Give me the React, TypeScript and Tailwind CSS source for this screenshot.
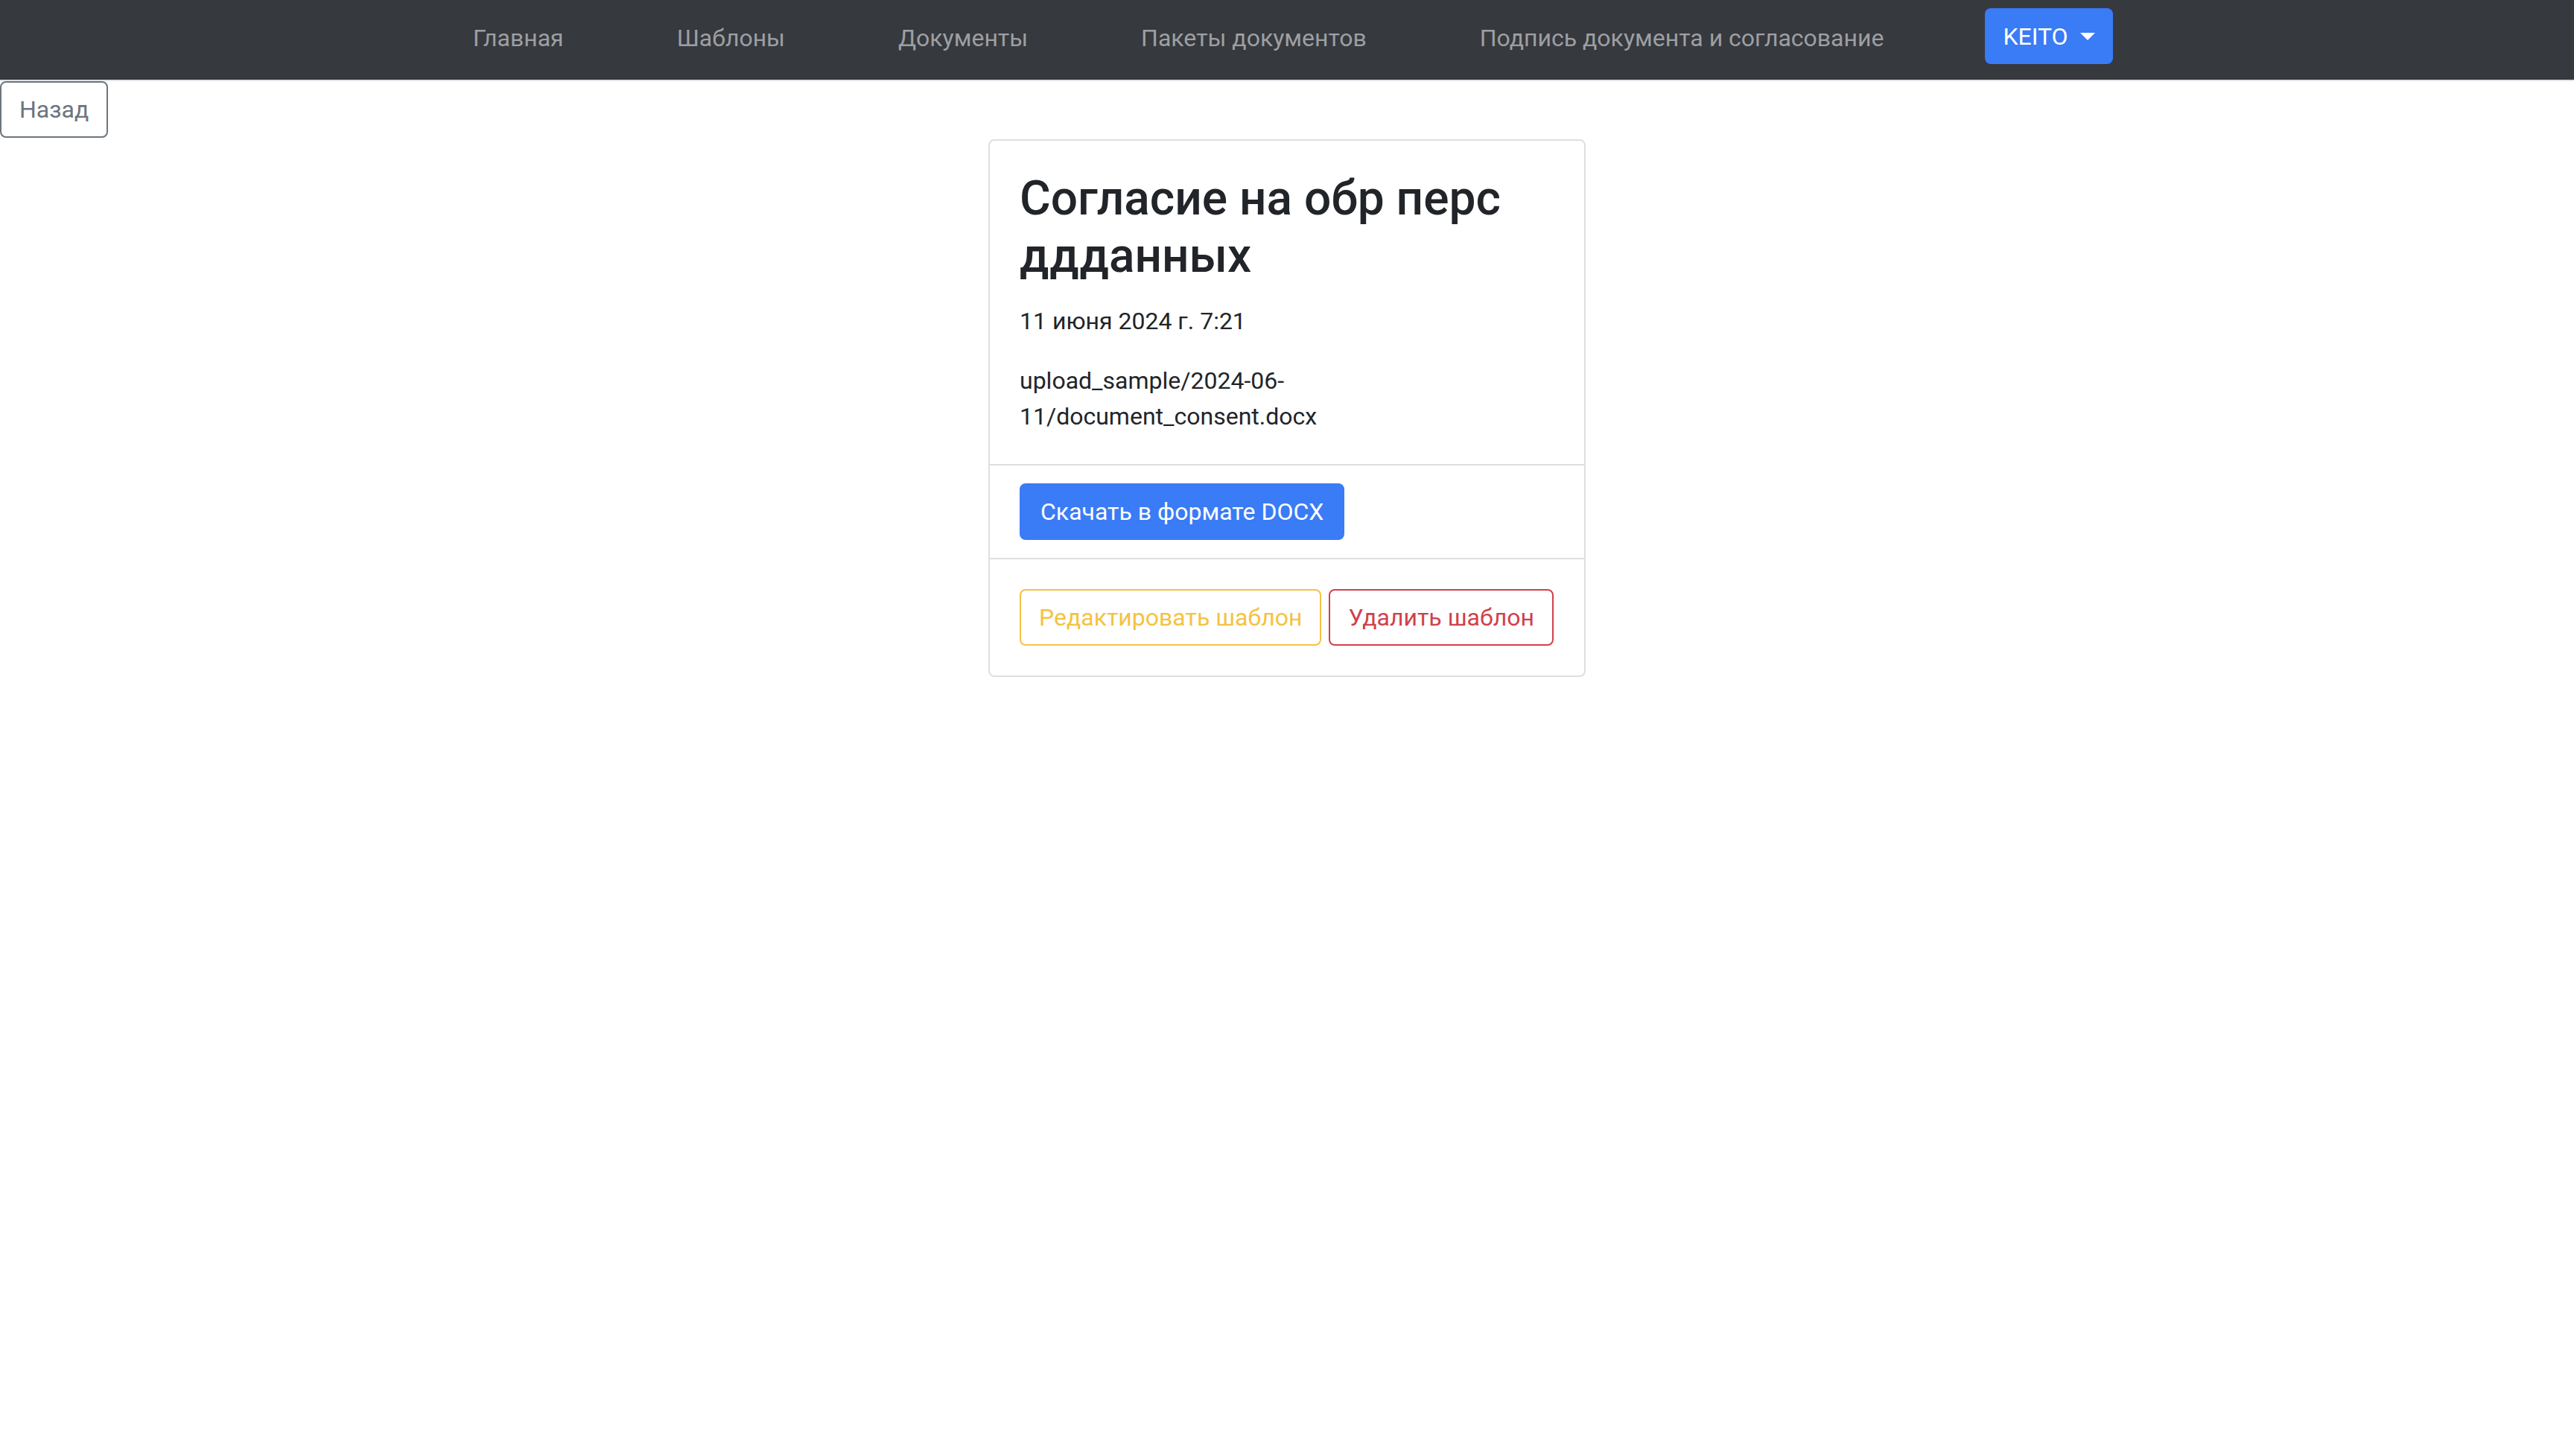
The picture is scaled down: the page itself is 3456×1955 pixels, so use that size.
import React from "react";

const navLinks = [
  "Главная",
  "Шаблоны",
  "Документы",
  "Пакеты документов",
  "Подпись документа и согласование",
];

export default function App() {
  return (
    <div className="min-h-screen bg-white font-['Roboto',sans-serif] text-[#212529]">
      {/* Top navbar */}
      <nav className="h-[109px] bg-[#36393e] border-b-2 border-[#dee2e6]">
        <div className="flex items-center gap-[152px] pl-[635px] pt-[11px] h-[86px]">
          {navLinks.map((item) => (
            <a
              key={item}
              href="#"
              className="mt-[4px] text-[32px] leading-[48px] text-[#9d9fa2] whitespace-nowrap"
            >
              {item}
            </a>
          ))}
          <button className="-ml-[16px] flex items-center h-[75px] px-[24px] rounded-[8px] bg-[#3a7bf6] text-white text-[32px] leading-[48px]">
            <span>KEITO</span>
            <span className="ml-[16px] w-0 h-0 border-x-[10px] border-x-transparent border-t-[10px] border-t-white" />
          </button>
        </div>
      </nav>

      {/* Back button */}
      <button className="block border-2 border-[#6c757d] text-[#6c757d] rounded-[8px] px-[24px] py-[12px] text-[32px] leading-[48px]">
        Назад
      </button>

      {/* Template card */}
      <div className="w-[802px] mx-auto mt-[2px] border-2 border-[#dfdfdf] rounded-[8px]">
        <div className="p-[40px]">
          <h2 className="text-[64px] leading-[1.2] font-medium mb-[24px]">
            Согласие на обр перс ддданных
          </h2>
          <p className="text-[32px] leading-[48px] mb-[32px]">11 июня 2024 г. 7:21</p>
          <p className="text-[32px] leading-[48px]">
            upload_sample/2024-06-11/document_consent.docx
          </p>
        </div>
        <div className="border-t-2 border-[#dfdfdf] px-[40px] py-[24px]">
          <button className="border-2 border-[#3a7bf6] bg-[#3a7bf6] text-white rounded-[8px] px-[26px] py-[12px] text-[32px] leading-[48px] whitespace-nowrap">
            Скачать в формате DOCX
          </button>
        </div>
        <div className="border-t-2 border-[#dfdfdf] p-[40px] flex gap-[10px]">
          <button className="border-2 border-[#f5c242] text-[#f5c242] rounded-[8px] px-[24px] py-[12px] text-[32px] leading-[48px] whitespace-nowrap">
            Редактировать шаблон
          </button>
          <button className="border-2 border-[#d0414a] text-[#d0414a] rounded-[8px] px-[24px] py-[12px] text-[32px] leading-[48px] whitespace-nowrap">
            Удалить шаблон
          </button>
        </div>
      </div>
    </div>
  );
}
